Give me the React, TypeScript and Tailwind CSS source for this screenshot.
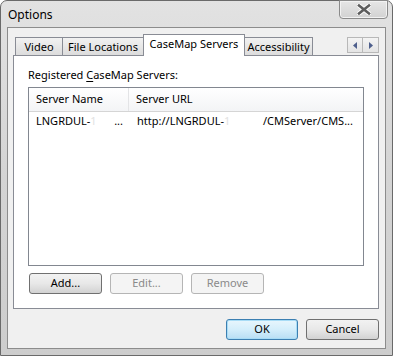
const font = { fontFamily: '"Noto Sans", "Open Sans", sans-serif' }

function CloseGlyph() {
  return (
    <svg width="14" height="11" viewBox="0 0 14 11">
      <path
        d="M2 1.5 L12 9.5 M12 1.5 L2 9.5"
        stroke="#ffffff"
        strokeWidth="4.5"
        strokeLinecap="square"
      />
      <path
        d="M2 1.5 L12 9.5 M12 1.5 L2 9.5"
        stroke="#5e5e5e"
        strokeWidth="2.6"
        strokeLinecap="square"
      />
    </svg>
  )
}

function Arrow({ dir }: { dir: 'left' | 'right' }) {
  return (
    <svg width="4" height="7" viewBox="0 0 4 7">
      {dir === 'left' ? (
        <path d="M4 0 L0 3.5 L4 7 Z" fill="#4e5f8c" />
      ) : (
        <path d="M0 0 L4 3.5 L0 7 Z" fill="#4e5f8c" />
      )}
    </svg>
  )
}

function Tab({ label, className }: { label: string; className: string }) {
  return (
    <div
      className={`flex h-[18px] items-center justify-center border-[#898c95] bg-gradient-to-b from-[#f2f2f2] to-[#dcdcdc] pt-px text-[11px] text-black ${className}`}
    >
      {label}
    </div>
  )
}

function PushButton({
  label,
  disabled,
  primary,
  className = '',
}: {
  label: string
  disabled?: boolean
  primary?: boolean
  className?: string
}) {
  let look =
    'border-[#707070] bg-gradient-to-b from-[#f2f2f2] via-[#e8e8e8] to-[#d2d2d2] text-black'
  if (disabled) look = 'border-[#b5b5b5] bg-[#f4f4f4] text-[#8a8a8a]'
  if (primary)
    look =
      'border-[#3c7fb1] bg-gradient-to-b from-[#e8f6fd] via-[#d4eefb] to-[#b8def4] text-black shadow-[inset_0_0_0_1px_#a8dcf6]'
  return (
    <div
      className={`flex h-[21px] items-center justify-center rounded-[3px] border text-[11px] ${look} ${className}`}
    >
      {label}
    </div>
  )
}

export default function App() {
  return (
    <div className="h-[356px] w-[393px] bg-white" style={font}>
      <div className="flex h-full w-full flex-col rounded-t-[7px] border border-[#6a6a6a] bg-gradient-to-b from-[#e2e2e2] via-[#d4d4d4] to-[#cdcdcd]">
        {/* title bar */}
        <div className="flex h-[26px] shrink-0">
          <span className="ml-[7px] mt-[5px] text-[12px] text-black">Options</span>
          <div className="ml-auto mr-[4px] -mt-px flex h-[19px] w-[49px] items-center justify-center rounded-b-[4px] border border-[#8a8a8a] bg-gradient-to-b from-[#e6e6e6] to-[#d2d2d2] shadow-[inset_0_0_0_1px_#f2f2f2]">
            <CloseGlyph />
          </div>
        </div>

        {/* client area */}
        <div className="mx-[6px] mb-[6px] flex flex-1 flex-col border border-[#8c8c8c] bg-[#f0f0f0] pl-[5px] pr-[6px] pt-[6px]">
          {/* tab strip */}
          <div className="flex h-[21px] items-end pl-[2px]">
            <Tab label="Video" className="w-[47px] border-l border-t" />
            <Tab label="File Locations" className="w-[81px] border-l border-t" />
            <div className="relative z-10 -mb-px flex h-[22px] w-[102px] items-start justify-center border-x border-t border-[#898c95] bg-white pt-[1px] text-[11px] text-black">
              CaseMap Servers
            </div>
            <Tab label="Accessibility" className="w-[68px] border-r border-t" />
            <div className="mb-[2px] ml-auto flex self-start pt-[3px]">
              <div className="flex h-[16px] w-[16px] items-center justify-center border border-[#b8b8b8] bg-gradient-to-b from-[#f4f4f4] to-[#e4e4e4]">
                <Arrow dir="left" />
              </div>
              <div className="flex h-[16px] w-[16px] items-center justify-center border border-l-0 border-[#b8b8b8] bg-gradient-to-b from-[#f4f4f4] to-[#e4e4e4]">
                <Arrow dir="right" />
              </div>
            </div>
          </div>

          {/* tab page */}
          <div className="flex h-[254px] flex-col border border-[#898c95] bg-white px-[14px] pt-[11px] text-[11px] text-black">
            <div className="h-[15px] leading-[15px]">
              Registered <span className="underline underline-offset-2">C</span>aseMap Servers:
            </div>
            <div className="mt-[5px] flex h-[179px] flex-col border border-[#828790]">
              <div className="flex h-[24px] border-b border-[#d5d5d5] bg-gradient-to-b from-white to-[#f3f4f6]">
                <div className="flex w-[100px] items-center border-r border-[#e3e4e6] pl-[7px]">
                  Server Name
                </div>
                <div className="flex items-center pl-[7px]">Server URL</div>
              </div>
              <div className="flex h-[19px] items-center">
                <div className="flex w-[101px] items-center pl-[7px]">
                  <span>LNGRDUL-</span>
                  <span className="text-[#e2e2e2]">1</span>
                  <span className="ml-auto mr-[7px]">...</span>
                </div>
                <div className="flex flex-1 items-center pl-[7px]">
                  <span>http://LNGRDUL-</span>
                  <span className="text-[#e2e2e2]">1</span>
                  <span className="ml-auto mr-[10px]">/CMServer/CMS...</span>
                </div>
              </div>
            </div>
            <div className="ml-px mt-[7px] flex gap-[8px]">
              <PushButton label="Add..." className="w-[73px]" />
              <PushButton label="Edit..." disabled className="w-[73px]" />
              <PushButton label="Remove" disabled className="w-[73px]" />
            </div>
          </div>

          {/* dialog buttons */}
          <div className="mt-[10px] flex justify-end gap-[8px]">
            <PushButton label="OK" primary className="w-[72px]" />
            <PushButton label="Cancel" className="w-[73px]" />
          </div>
        </div>
      </div>
    </div>
  )
}
